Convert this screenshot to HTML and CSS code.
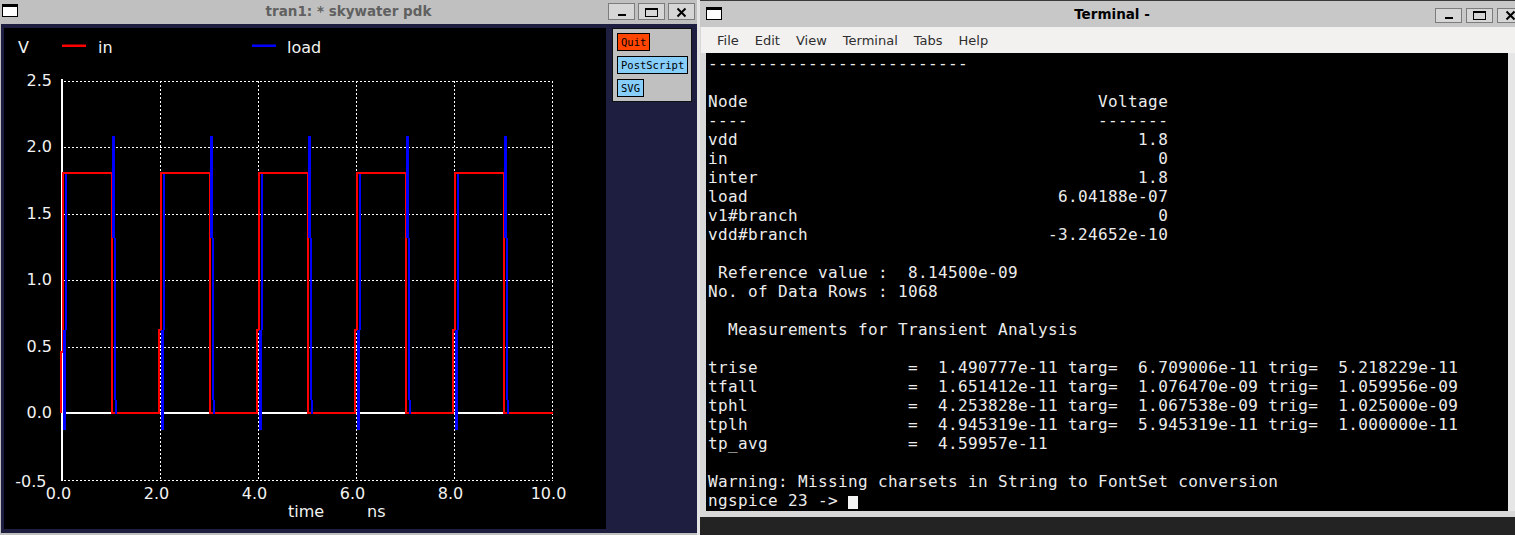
FILE: index.html
```html
<!DOCTYPE html>
<html>
<head>
<meta charset="utf-8">
<title>ngspice</title>
<link rel="stylesheet" href="styles.css">
</head>
<body>
<div class="plotwin">
  <div class="tb">
    <span class="tb-icon"></span>
    <span class="tb-title">tran1: * skywater pdk</span>
    <div class="tb-btns">
      <span class="wbtn"><svg width="25" height="15" viewBox="0 0 25 15"><rect x="9" y="10" width="8" height="2" fill="#000"/></svg></span>
      <span class="wbtn"><svg width="25" height="15" viewBox="0 0 25 15"><rect x="6.5" y="4.5" width="12" height="8" fill="none" stroke="#000"/><rect x="6" y="4" width="13" height="2" fill="#000"/></svg></span>
      <span class="wbtn"><svg width="25" height="15" viewBox="0 0 25 15"><path d="M8.5 4.5 L16.5 12.5 M16.5 4.5 L8.5 12.5" stroke="#000" stroke-width="2"/></svg></span>
    </div>
  </div>
  <div class="frame">
    <div class="plot">
      <svg width="602" height="501" viewBox="0 0 602 501" class="plotsvg">
        <g stroke="#fff" stroke-width="1" stroke-dasharray="2 2" shape-rendering="crispEdges">
          <path d="M60 53.5 H549 M60 119.5 H549 M60 186.5 H549 M60 252.5 H549 M60 319.5 H549 M60 452.5 H549"/>
          <path d="M156.5 53 V453 M254.5 53 V453 M352.5 53 V453 M450.5 53 V453 M548.5 53 V453"/>
        </g>
        <g fill="#fff" shape-rendering="crispEdges">
          <rect x="57" y="51" width="2" height="402"/>
          <rect x="58" y="384" width="491" height="2"/>
        </g>
        <path d="M57,385 V324 H59 V145 H108 V385 H155 V302 H157 V145 H206 V385 H253 V302 H255 V145 H304 V385 H351 V302 H353 V145 H402 V385 H449 V302 H451 V145 H500 V385 H549" fill="none" stroke="#ff0000" stroke-width="2" shape-rendering="crispEdges"/>
        <path d="M60.5 402 V302 M109.5 108 V210 M158.5 402 V302 M207.5 108 V210 M256.5 402 V302 M305.5 108 V210 M354.5 402 V302 M403.5 108 V210 M452.5 402 V302 M501.5 108 V210" fill="none" stroke="#0000ff" stroke-width="3" shape-rendering="crispEdges"/>
        <path d="M61.5 302 V146 M111 210 V372 M112 372 V386 M159.5 302 V146 M209 210 V372 M210 372 V386 M257.5 302 V146 M307 210 V372 M308 372 V386 M355.5 302 V146 M405 210 V372 M406 372 V386 M453.5 302 V146 M503 210 V372 M504 372 V386" fill="none" stroke="#0000ff" stroke-width="2" shape-rendering="crispEdges"/>
        <g class="lbl">
          <text x="14" y="25">V</text>
          <text x="94" y="25">in</text>
          <text x="283" y="25">load</text>
          <text x="48" y="58" text-anchor="end">2.5</text>
          <text x="48" y="124" text-anchor="end">2.0</text>
          <text x="48" y="191" text-anchor="end">1.5</text>
          <text x="48" y="257" text-anchor="end">1.0</text>
          <text x="48" y="324" text-anchor="end">0.5</text>
          <text x="48" y="390" text-anchor="end">0.0</text>
          <text x="42.5" y="459" text-anchor="end">-0.5</text>
          <text x="54.5" y="471" text-anchor="middle">0.0</text>
          <text x="152.5" y="471" text-anchor="middle">2.0</text>
          <text x="250.5" y="471" text-anchor="middle">4.0</text>
          <text x="348.5" y="471" text-anchor="middle">6.0</text>
          <text x="446.5" y="471" text-anchor="middle">8.0</text>
          <text x="544.5" y="471" text-anchor="middle">10.0</text>
          <text x="284" y="489">time</text>
          <text x="363" y="489">ns</text>
        </g>
        <rect x="58" y="16.5" width="24" height="2.5" fill="#ff0000"/>
        <rect x="248" y="16.5" width="24" height="2.5" fill="#0000ff"/>
      </svg>
    </div>
    <div class="panel">
      <span class="pbtn quit">Quit</span>
      <span class="pbtn blue">PostScript</span>
      <span class="pbtn blue">SVG</span>
    </div>
  </div>
</div>
<div class="rightcol">
  <div class="term">
    <div class="tb ttb">
      <span class="tb-icon ticon"></span>
      <span class="tb-title ttitle">Terminal -</span>
      <div class="tb-btns tbtns">
        <span class="wbtn"><svg width="25" height="13" viewBox="0 0 25 13"><rect x="9" y="8" width="8" height="2" fill="#000"/></svg></span>
        <span class="wbtn"><svg width="25" height="13" viewBox="0 0 25 13"><rect x="6.5" y="2.5" width="12" height="8" fill="none" stroke="#000"/><rect x="6" y="2" width="13" height="2" fill="#000"/></svg></span>
        <span class="wbtn"><svg width="25" height="13" viewBox="0 0 25 13"><path d="M8.5 2.5 L16.5 10.5 M16.5 2.5 L8.5 10.5" stroke="#000" stroke-width="2"/></svg></span>
      </div>
    </div>
    <div class="menubar">
      <span class="mi">File</span>
      <span class="mi">Edit</span>
      <span class="mi">View</span>
      <span class="mi">Terminal</span>
      <span class="mi">Tabs</span>
      <span class="mi">Help</span>
    </div>
    <div class="termbody">
      <div class="screen"><pre class="out">--------------------------

Node                                   Voltage
----                                   -------
vdd                                        1.8
in                                           0
inter                                      1.8
load                               6.04188e-07
v1#branch                                    0
vdd#branch                        -3.24652e-10

 Reference value :  8.14500e-09
No. of Data Rows : 1068

  Measurements for Transient Analysis

trise               =  1.490777e-11 targ=  6.709006e-11 trig=  5.218229e-11
tfall               =  1.651412e-11 targ=  1.076470e-09 trig=  1.059956e-09
tphl                =  4.253828e-11 targ=  1.067538e-09 trig=  1.025000e-09
tplh                =  4.945319e-11 targ=  5.945319e-11 trig=  1.000000e-11
tp_avg              =  4.59957e-11

Warning: Missing charsets in String to FontSet conversion
ngspice 23 -&gt; <span class="cursor"></span></pre></div>
      <div class="scroll"></div>
    </div>
  </div>
  <div class="desk"></div>
</div>
</body>
</html>
```
FILE: styles.css
```css
* { box-sizing: border-box; margin: 0; padding: 0; }
html, body { width: 1515px; height: 535px; overflow: hidden; }
body {
  background: #e4e4e4;
  display: flex;
  gap: 3px;
  font-family: "DejaVu Sans", sans-serif;
}

/* ---------- plot window ---------- */
.plotwin {
  flex: none;
  width: 697px;
  height: 535px;
  background: #c0c0c0;
  display: flex;
  flex-direction: column;
}
.tb {
  flex: none;
  height: 24px;
  display: grid;
  grid-template-columns: 1fr auto 1fr;
  align-items: start;
}
.tb-icon {
  margin: 4px 0 0 2px;
  width: 16px;
  height: 13px;
  background: #fff;
  border: 1px solid #000;
  border-top-width: 3px;
}
.tb-title {
  font-weight: bold;
  font-size: 13.5px;
  color: #606060;
  line-height: 20px;
  padding-top: 1px;
  white-space: nowrap;
}
.tb-btns {
  justify-self: end;
  display: flex;
  gap: 3px;
  padding: 3px 2px 0 0;
}
.wbtn {
  display: block;
  width: 27px;
  height: 17px;
  background: #d6d6d6;
  border: 1px solid #7c7c7c;
}
.wbtn svg { display: block; }

.frame {
  flex: 1;
  margin: 0 0 2px 1px;
  background: #1e1e40;
  padding: 4px 0 4px 3px;
  display: flex;
  align-items: flex-start;
}
.plot {
  width: 602px;
  height: 501px;
  background: #000;
  flex: none;
}
.plotsvg { display: block; }
.lbl text {
  font-family: "DejaVu Sans", sans-serif;
  font-size: 16px;
  fill: #f2f2f2;
}
.panel {
  margin-left: 6px;
  width: 80px;
  height: 74px;
  background: #c0c0c0;
  border: 1px solid #101010;
  padding: 4px;
  display: flex;
  flex-direction: column;
  align-items: flex-start;
  gap: 5px;
}
.pbtn {
  display: block;
  height: 18px;
  border: 1px solid #000;
  padding: 0 3px;
  font-family: "DejaVu Sans Mono", monospace;
  font-size: 10.5px;
  line-height: 16px;
  color: #000;
}
.quit { background: #ff4500; }
.blue { background: #87cefa; }

/* ---------- terminal ---------- */
.rightcol {
  flex: none;
  width: 824px;
  display: flex;
  flex-direction: column;
}
.term {
  height: 517px;
  background: #d8d8d8;
  border-top: 1px solid #3a3a3a;
  display: flex;
  flex-direction: column;
}
.ttb {
  height: 26px;
  background: #c8c8c8;
}
.ticon { margin: 6px 0 0 6px; }
.ttitle { color: #000; padding-top: 3px; }
.tbtns { padding: 7px 0 0 0; gap: 4px; }
.tbtns .wbtn { height: 15px; }
.menubar {
  height: 26px;
  background: #f2f1f0;
  display: flex;
  align-items: center;
  padding-left: 8px;
  margin-left: 1px;
}
.mi {
  font-size: 13px;
  color: #2e2e2e;
  padding: 0 8px;
}
.mi:first-child { padding-left: 8px; }
.termbody {
  height: 458px;
  display: flex;
  padding-left: 6px;
}
.screen {
  width: 802px;
  height: 458px;
  background: #000;
  overflow: hidden;
}
.out {
  padding: 1px 0 0 2px;
  font-family: "DejaVu Sans Mono", monospace;
  font-size: 16px;
  letter-spacing: 0.37px;
  line-height: 19px;
  color: #ececec;
}
.cursor {
  display: inline-block;
  width: 10px;
  height: 13px;
  background: #f4f4f4;
  vertical-align: -3px;
}
.scroll {
  width: 16px;
  background: #e6e6e6;
}
.desk {
  flex: 1;
  background: #232323;
}
```
